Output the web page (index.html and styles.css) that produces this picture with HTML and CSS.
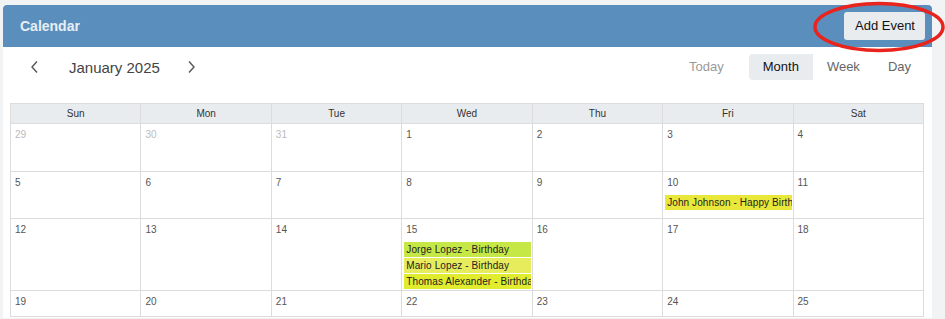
FILE: index.html
```html
<!DOCTYPE html>
<html>
<head>
	<meta charset="utf-8">
	<title>Calendar</title>
	<link rel="stylesheet" href="styles.css">
</head>
<body>
	<div class="card">
		<div class="card-head">
			<span class="card-title">Calendar</span>
			<a class="btn-add" href="javascript:;">Add Event</a>
		</div>
		<div class="toolbar">
			<div class="nav">
				<a class="nav-btn" href="javascript:;">
					<svg width="10" height="14" viewBox="0 0 10 14"><path d="M7 1.5 L2 7 L7 12.5" fill="none" stroke="#555" stroke-width="1.4"/></svg>
				</a>
				<span class="month-title">January 2025</span>
				<a class="nav-btn" href="javascript:;">
					<svg width="10" height="14" viewBox="0 0 10 14"><path d="M3 1.5 L8 7 L3 12.5" fill="none" stroke="#555" stroke-width="1.4"/></svg>
				</a>
			</div>
			<div class="views">
				<a class="view today" href="javascript:;">Today</a>
				<a class="view current" href="javascript:;">Month</a>
				<a class="view" href="javascript:;">Week</a>
				<a class="view" href="javascript:;">Day</a>
			</div>
		</div>
		<div class="grid">
			<div class="dow">Sun</div>
			<div class="dow">Mon</div>
			<div class="dow">Tue</div>
			<div class="dow">Wed</div>
			<div class="dow">Thu</div>
			<div class="dow">Fri</div>
			<div class="dow">Sat</div>

			<div class="day other"><span class="num">29</span></div>
			<div class="day other"><span class="num">30</span></div>
			<div class="day other"><span class="num">31</span></div>
			<div class="day"><span class="num">1</span></div>
			<div class="day"><span class="num">2</span></div>
			<div class="day"><span class="num">3</span></div>
			<div class="day"><span class="num">4</span></div>

			<div class="day"><span class="num">5</span></div>
			<div class="day"><span class="num">6</span></div>
			<div class="day"><span class="num">7</span></div>
			<div class="day"><span class="num">8</span></div>
			<div class="day"><span class="num">9</span></div>
			<div class="day"><span class="num">10</span>
				<div class="event ev-yellow">John Johnson - Happy Birthday</div>
			</div>
			<div class="day"><span class="num">11</span></div>

			<div class="day"><span class="num">12</span></div>
			<div class="day"><span class="num">13</span></div>
			<div class="day"><span class="num">14</span></div>
			<div class="day"><span class="num">15</span>
				<div class="event ev-green">Jorge Lopez - Birthday</div>
				<div class="event ev-pale">Mario Lopez - Birthday</div>
				<div class="event ev-lime">Thomas Alexander - Birthday</div>
			</div>
			<div class="day"><span class="num">16</span></div>
			<div class="day"><span class="num">17</span></div>
			<div class="day"><span class="num">18</span></div>

			<div class="day"><span class="num">19</span></div>
			<div class="day"><span class="num">20</span></div>
			<div class="day"><span class="num">21</span></div>
			<div class="day"><span class="num">22</span></div>
			<div class="day"><span class="num">23</span></div>
			<div class="day"><span class="num">24</span></div>
			<div class="day"><span class="num">25</span></div>
		</div>
	</div>
	<svg class="mark" width="135" height="56" viewBox="0 0 135 56">
		<ellipse cx="67" cy="27" rx="64" ry="23.5" fill="none" stroke="#e8241c" stroke-width="3.5"/>
	</svg>
</body>
</html>
```

FILE: styles.css
```css
*{margin: 0;padding: 0;box-sizing: border-box;}
a{text-decoration: none;color: inherit;}
body {
	background: #f2f3f5;
	font-family: "Liberation Sans", Arial, sans-serif;
	padding: 5px 0 0 3px;
	position: relative;
	height: 319px;
	overflow: hidden;
}
.card {
	width: 929px;
	background: #fff;
	padding-bottom: 1px;
}
.card-head {
	height: 42px;
	background: #5a8ebc;
	border-radius: 4px 4px 0 0;
	display: flex;
	align-items: center;
	justify-content: space-between;
	padding: 0 7px 0 17px;
}
.card-title {
	color: #e8eef6;
	font-size: 14px;
	font-weight: bold;
}
.btn-add {
	display: block;
	height: 28px;
	line-height: 28px;
	padding: 0 10px 0 11px;
	background: #e9ecef;
	border-radius: 3px;
	font-size: 13px;
	color: #111;
}
.toolbar {
	display: flex;
	justify-content: space-between;
	align-items: center;
	padding: 7px 7px 23px 10px;
}
.nav {
	display: flex;
	align-items: center;
}
.nav-btn {
	display: flex;
	align-items: center;
	justify-content: center;
	width: 24px;
	height: 26px;
}
.nav-btn:first-child {
	margin-left: 10px;
}
.month-title {
	font-size: 15px;
	color: #444;
	margin: 0 19px 0 22px;
}
.views {
	display: flex;
}
.view {
	display: block;
	height: 26px;
	line-height: 26px;
	padding: 0 14px;
	font-size: 13px;
	color: #666;
}
.view.today {
	color: #999;
	margin-right: 11px;
}
.view.current {
	background: #e9ecef;
	color: #111;
	border-radius: 4px 0 0 4px;
}
.grid {
	margin-left: 7px;
	width: 914px;
	display: grid;
	grid-template-columns: repeat(7, 1fr);
	grid-template-rows: 20px 48px 47px 72px 26px;
	border-top: 1px solid #dcdcdc;
	border-left: 1px solid #dcdcdc;
}
.dow, .day {
	border-right: 1px solid #dcdcdc;
	border-bottom: 1px solid #dcdcdc;
	min-width: 0;
	overflow: hidden;
}
.dow {
	background: #e9ecef;
	font-size: 10px;
	line-height: 19px;
	text-align: center;
	color: #333;
}
.num {
	display: block;
	font-size: 10px;
	line-height: 12px;
	padding: 5px 0 0 4px;
	color: #555;
	height: 23px;
}
.day.other .num {
	color: #bbb;
}
.event {
	height: 15px;
	line-height: 15px;
	margin: 0 1px 1px 2px;
	padding-left: 2px;
	font-size: 10px;
	letter-spacing: 0.1px;
	color: #222;
	white-space: nowrap;
	overflow: hidden;
}
.ev-yellow { background: #e9e83a; }
.ev-green { background: #c6e846; }
.ev-pale { background: #e6ec5c; }
.ev-lime { background: #e2ec2e; }
.mark {
	position: absolute;
	left: 812px;
	top: 0;
}
```
